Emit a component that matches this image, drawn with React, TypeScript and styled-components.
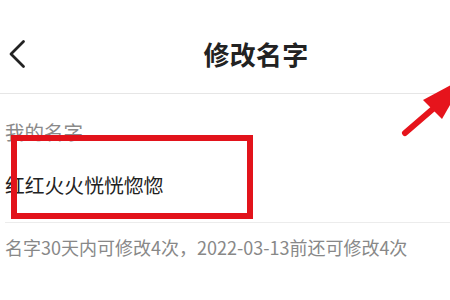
import React from "react";
import styled, { createGlobalStyle } from "styled-components";

const Global = createGlobalStyle`
  html, body { margin: 0; padding: 0; background: #fff; overflow: hidden; }
  body { font-family: "Noto Sans CJK SC", "Noto Sans", sans-serif; }
`;

const Page = styled.div`
  position: relative;
  width: 450px;
  height: 300px;
  overflow: hidden;
  background: #fff;
`;

const Header = styled.header`
  height: 79px;
  padding-top: 14px;
  border-bottom: 1px solid #e6e6e6;
  display: grid;
  grid-template-columns: 70px 1fr 8px;
  align-items: center;
`;

const Back = styled.button`
  justify-self: start;
  width: 24px;
  height: 34px;
  margin-left: 4px;
  padding: 0;
  border: 0;
  background: none;
  display: flex;
  align-items: center;
  justify-content: center;
`;

const Title = styled.h1`
  margin: 0;
  justify-self: center;
  font-size: 26px;
  line-height: 34px;
  font-weight: 700;
  color: #222;
  letter-spacing: 0.3px;
`;

const Section = styled.section`
  display: flex;
  flex-direction: column;
  padding-left: 5px;
`;

const Label = styled.div`
  margin-top: 26px;
  font-size: 19.5px;
  line-height: 24px;
  color: #8a8a8a;
`;

const Row = styled.div`
  position: relative;
  padding: 27px 0 23px;
  font-size: 19.8px;
  line-height: 28px;
  color: #222;
  border-bottom: 1px solid #ececec;
`;

const Highlight = styled.div`
  position: absolute;
  left: 6px;
  top: -9px;
  width: 230px;
  height: 72px;
  border: 6px solid #e2131b;
`;

const Note = styled.p`
  margin: 12px 0 0;
  font-size: 18px;
  line-height: 24px;
  color: #888;
`;

const ArrowLayer = styled.svg`
  position: absolute;
  left: 395px;
  top: 70px;
  overflow: hidden;
`;

export default function App() {
  return (
    <>
      <Global />
      <Page>
        <Header>
          <Back aria-label="返回">
            <svg width="20" height="32" viewBox="0 0 20 32">
              <path
                d="M17.5 3.5 L5 16 L17.5 28.5"
                fill="none"
                stroke="#222"
                strokeWidth="2.8"
                strokeLinecap="round"
                strokeLinejoin="round"
              />
            </svg>
          </Back>
          <Title>修改名字</Title>
          <span />
        </Header>
        <Section>
          <Label>我的名字</Label>
          <Row>
            红红火火恍恍惚惚
            <Highlight />
          </Row>
          <Note>名字30天内可修改4次，2022-03-13前还可修改4次</Note>
        </Section>
        <ArrowLayer width="55" height="75" viewBox="395 70 55 75">
          <line
            x1="405"
            y1="133"
            x2="434"
            y2="108"
            stroke="#e6141c"
            strokeWidth="6"
            strokeLinecap="round"
          />
          <polygon points="423,100 442,119 466,77" fill="#e6141c" />
        </ArrowLayer>
      </Page>
    </>
  );
}
